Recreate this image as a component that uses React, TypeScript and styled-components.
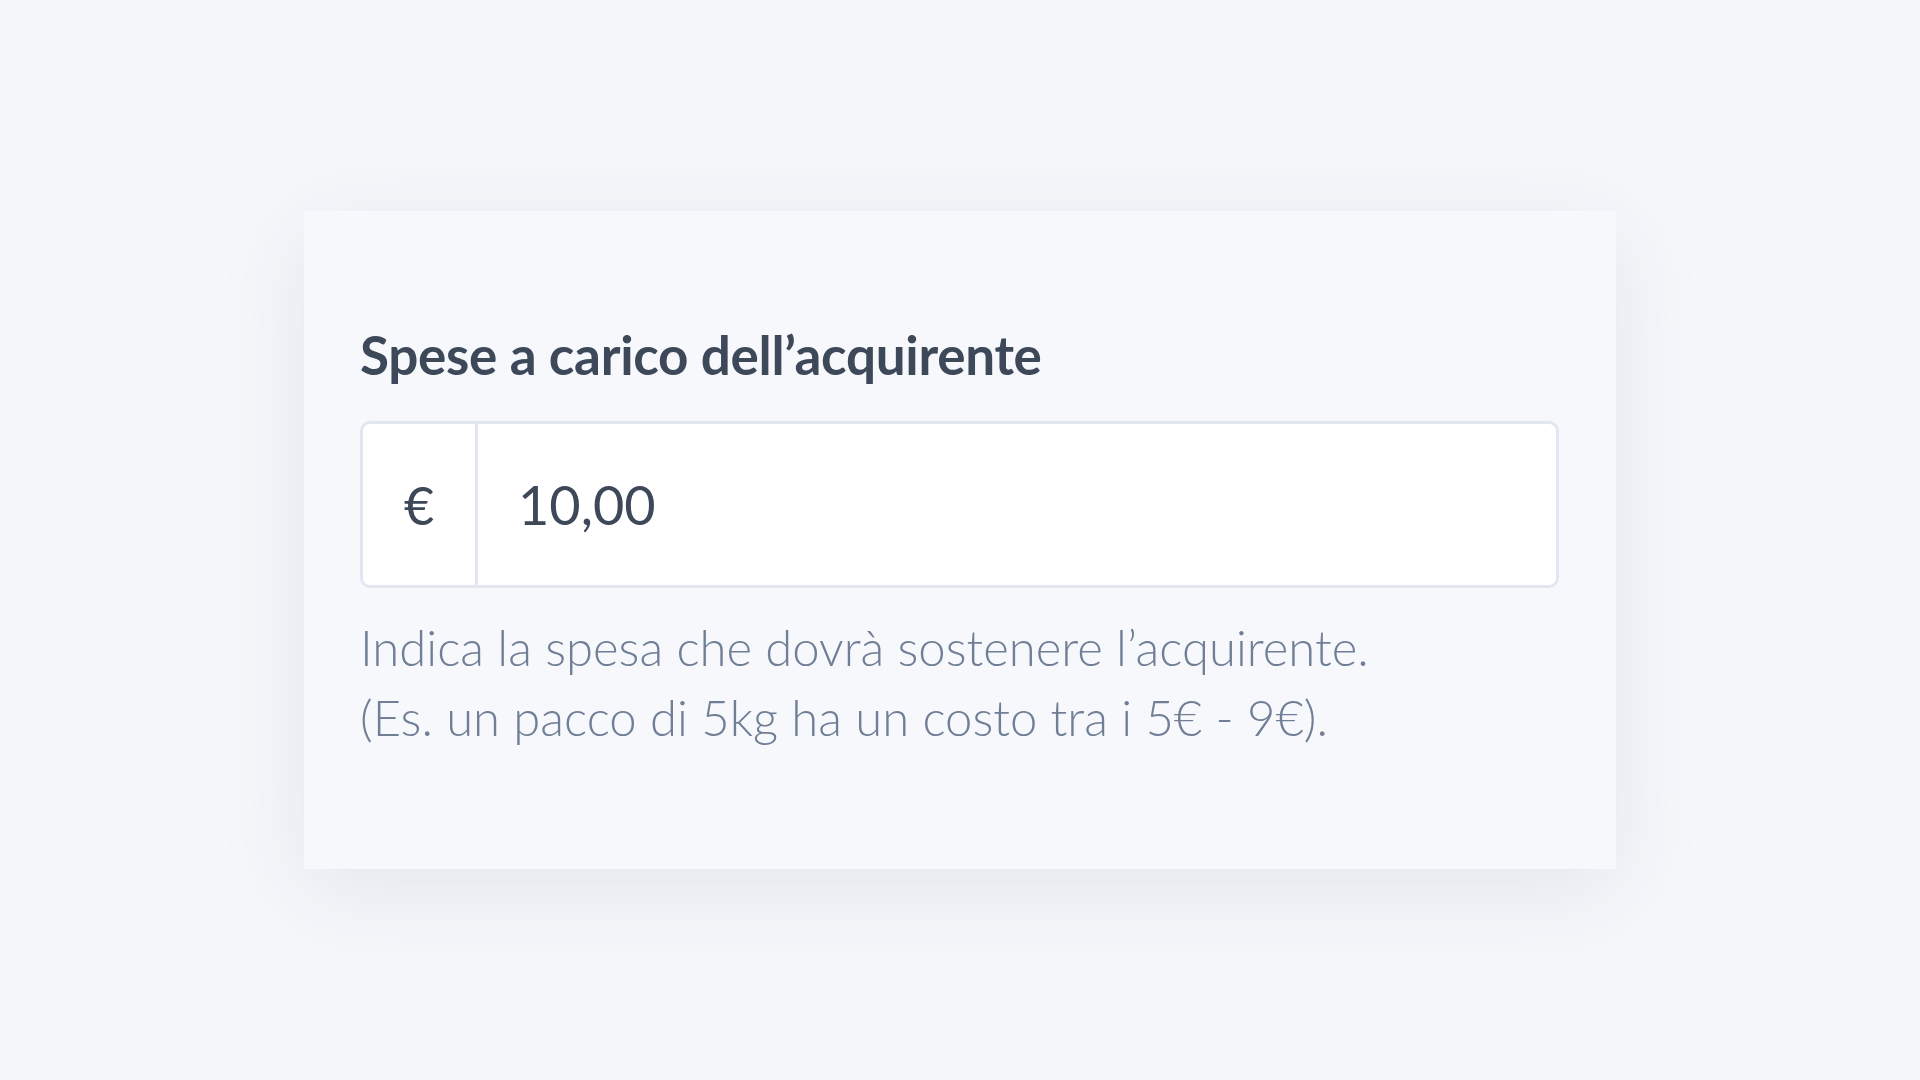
import React from 'react';
import styled, { createGlobalStyle } from 'styled-components';

const GlobalStyle = createGlobalStyle`
  html, body {
    margin: 0;
    padding: 0;
    background: #f6f7fb;
  }
  body {
    font-family: 'Lato', 'Noto Sans', sans-serif;
  }
`;

const Page = styled.div`
  width: 1920px;
  height: 1080px;
  box-sizing: border-box;
  padding: 211px 0 0 304px;
`;

const Card = styled.div`
  width: 1312px;
  height: 658px;
  box-sizing: border-box;
  padding: 114px 56px 0 56px;
  background: #f7f8fc;
  box-shadow: 0 20px 90px rgba(40, 50, 80, 0.09);
  display: flex;
  flex-direction: column;
`;

const Label = styled.div`
  font-size: 53px;
  font-weight: 700;
  line-height: 60px;
  color: #3d4859;
  letter-spacing: -0.3px;
`;

const InputGroup = styled.div`
  margin-top: 36px;
  width: 1199px;
  height: 167px;
  box-sizing: border-box;
  border: 3px solid #e2e6f0;
  border-radius: 10px;
  background: #ffffff;
  display: flex;
  align-items: stretch;
  overflow: hidden;
`;

const Prefix = styled.div`
  width: 112px;
  border-right: 3px solid #e2e6f0;
  display: flex;
  align-items: center;
  justify-content: center;
  font-size: 52px;
  color: #3d4859;
`;

const Value = styled.div`
  flex: 1;
  display: flex;
  align-items: center;
  padding-left: 40px;
  font-size: 54px;
  color: #3d4859;
`;

const Help = styled.div`
  margin-top: 24px;
  font-size: 49px;
  font-weight: 300;
  line-height: 70px;
  color: #717f96;
`;

export default function App() {
  return (
    <>
      <GlobalStyle />
      <Page>
        <Card>
          <Label>Spese a carico dell’acquirente</Label>
          <InputGroup>
            <Prefix>€</Prefix>
            <Value>10,00</Value>
          </InputGroup>
          <Help>
            Indica la spesa che dovrà sostenere l’acquirente.
            <br />
            (Es. un pacco di 5kg ha un costo tra i 5€ - 9€).
          </Help>
        </Card>
      </Page>
    </>
  );
}
